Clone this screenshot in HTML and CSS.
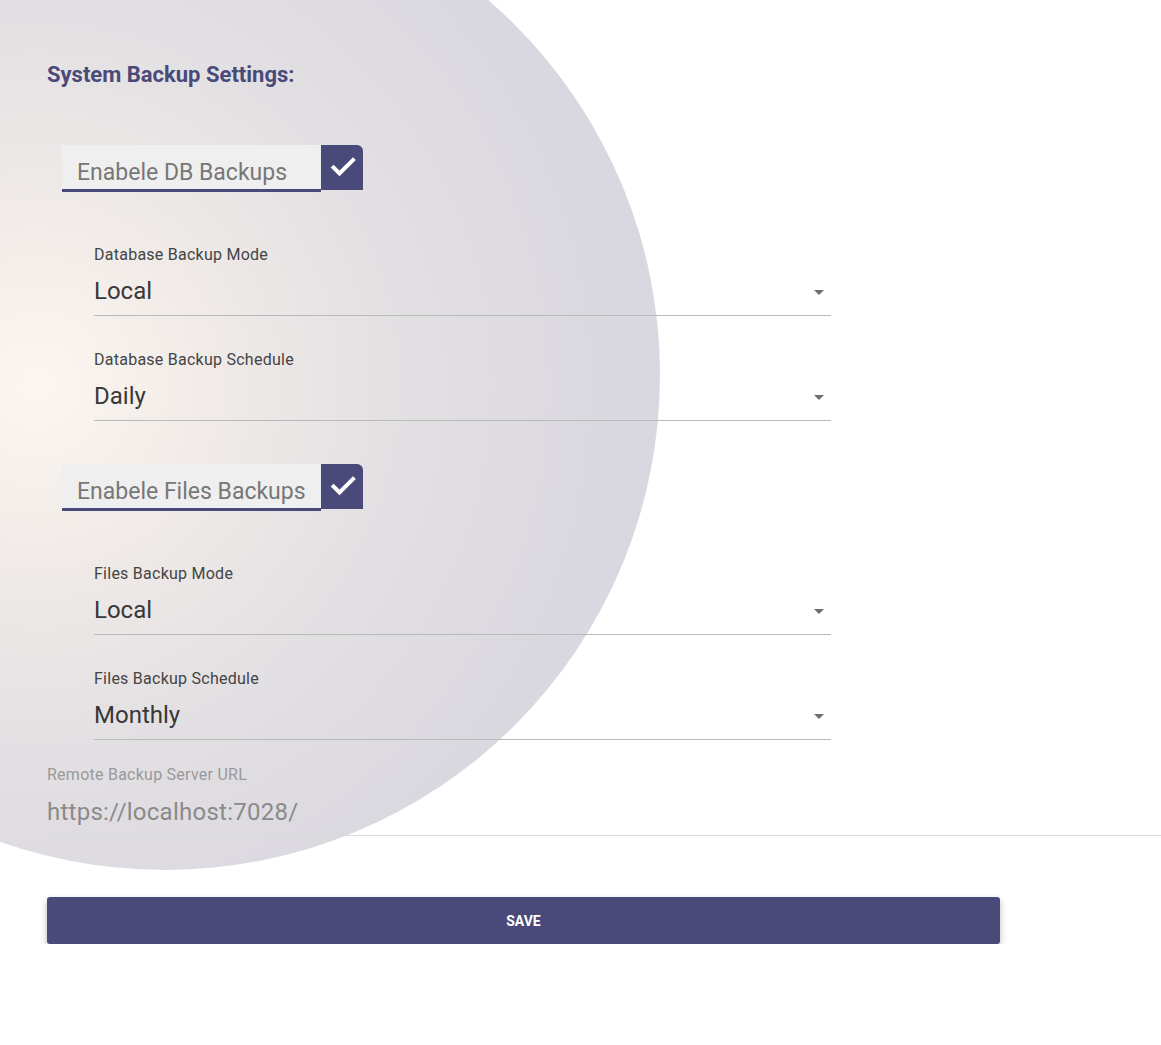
FILE: index.html
```html
<!DOCTYPE html>
<html lang="en">
<head>
    <meta charset="UTF-8">
    <title>System Backup Settings</title>
    <link rel="stylesheet" href="styles.css">
</head>
<body>
<div class="bg-circle"></div>
<form class="settings" name="backupform" onsubmit="return false">
    <h2 class="title">System Backup Settings:</h2>

    <div class="toggle">
        <span class="toggle-label">Enabele DB Backups</span>
        <span class="toggle-box">
            <svg width="26" height="24" viewBox="0 0 26 24"><path d="M3.5 12.5l6 6L23 5" fill="none" stroke="#fff" stroke-width="4" stroke-linecap="square"/></svg>
        </span>
    </div>

    <div class="group">
        <div class="field">
            <label>Database Backup Mode</label>
            <div class="value">Local<span class="arrow"></span></div>
        </div>
        <div class="field">
            <label>Database Backup Schedule</label>
            <div class="value">Daily<span class="arrow"></span></div>
        </div>
    </div>

    <div class="toggle">
        <span class="toggle-label">Enabele Files Backups</span>
        <span class="toggle-box">
            <svg width="26" height="24" viewBox="0 0 26 24"><path d="M3.5 12.5l6 6L23 5" fill="none" stroke="#fff" stroke-width="4" stroke-linecap="square"/></svg>
        </span>
    </div>

    <div class="group">
        <div class="field">
            <label>Files Backup Mode</label>
            <div class="value">Local<span class="arrow"></span></div>
        </div>
        <div class="field">
            <label>Files Backup Schedule</label>
            <div class="value">Monthly<span class="arrow"></span></div>
        </div>
    </div>

    <div class="field remote">
        <label>Remote Backup Server URL</label>
        <div class="value">https://localhost:7028/</div>
    </div>

    <button type="submit" class="savebtn">SAVE</button>
</form>
</body>
</html>
```

FILE: styles.css
```css
* {
    box-sizing: border-box;
}

body {
    margin: 0;
    font-family: Roboto, "Liberation Sans", Arial, sans-serif;
    background: #fff;
    overflow: hidden;
}

.bg-circle {
    position: absolute;
    left: -330px;
    top: -120px;
    width: 990px;
    height: 990px;
    border-radius: 50%;
    background: radial-gradient(circle at 37% 51%, #fbf6ef 0%, #f0ebe8 22%, #e3e0e3 45%, #d9d7df 75%, #d6d4dd 100%);
    z-index: -1;
}

.settings {
    position: relative;
    padding: 62px 0 0 47px;
}

.title {
    margin: 0;
    font-size: 22px;
    line-height: 26px;
    font-weight: 700;
    color: #4a4a7a;
}

.toggle {
    display: flex;
    width: 301px;
    height: 47px;
    margin: 57px 0 0 15px;
}

.toggle + .group {
    margin-top: 52px;
}

.group + .toggle {
    margin-top: 43px;
}

.toggle-label {
    flex: 1;
    background: #efefef;
    border-bottom: 3px solid #4a4a7a;
    color: #777;
    font-size: 23px;
    line-height: 24px;
    padding: 16px 0 0 15px;
}

.toggle-box {
    width: 42px;
    height: 45px;
    background: #4a4a7a;
    border-top-right-radius: 6px;
    display: flex;
    align-items: flex-start;
    justify-content: center;
    padding: 10px 0 0 2px;
}

.group {
    margin-left: 47px;
    width: 737px;
}

.field {
    border-bottom: 1px solid #b9b9b9;
    letter-spacing: 0.25px;
}

.field + .field {
    margin-top: 33px;
}

.field label {
    display: block;
    font-size: 16px;
    line-height: 20px;
    padding-top: 1px;
    color: #444;
}

.field .value {
    position: relative;
    margin-top: 8px;
    height: 42px;
    padding-bottom: 6px;
    font-size: 24px;
    line-height: 36px;
    letter-spacing: 0;
    color: #383838;
}

.arrow {
    position: absolute;
    right: 7px;
    top: 17px;
    border-left: 5px solid transparent;
    border-right: 5px solid transparent;
    border-top: 5px solid #6d6d6d;
}

.remote {
    margin-top: 24px;
    border-bottom-color: #dadada;
}

.remote label {
    color: #999;
}

.remote .value {
    color: #8a8a8a;
    letter-spacing: 0.25px;
    line-height: 38px;
}

.savebtn {
    display: block;
    width: 953px;
    height: 47px;
    margin-top: 61px;
    border: none;
    border-radius: 3px;
    background: #4a4a7a;
    color: #fff;
    font-family: Roboto, "Liberation Sans", Arial, sans-serif;
    font-size: 14px;
    font-weight: 700;
    cursor: pointer;
    box-shadow: 0 3px 7px rgba(0, 0, 0, 0.28);
}
```
